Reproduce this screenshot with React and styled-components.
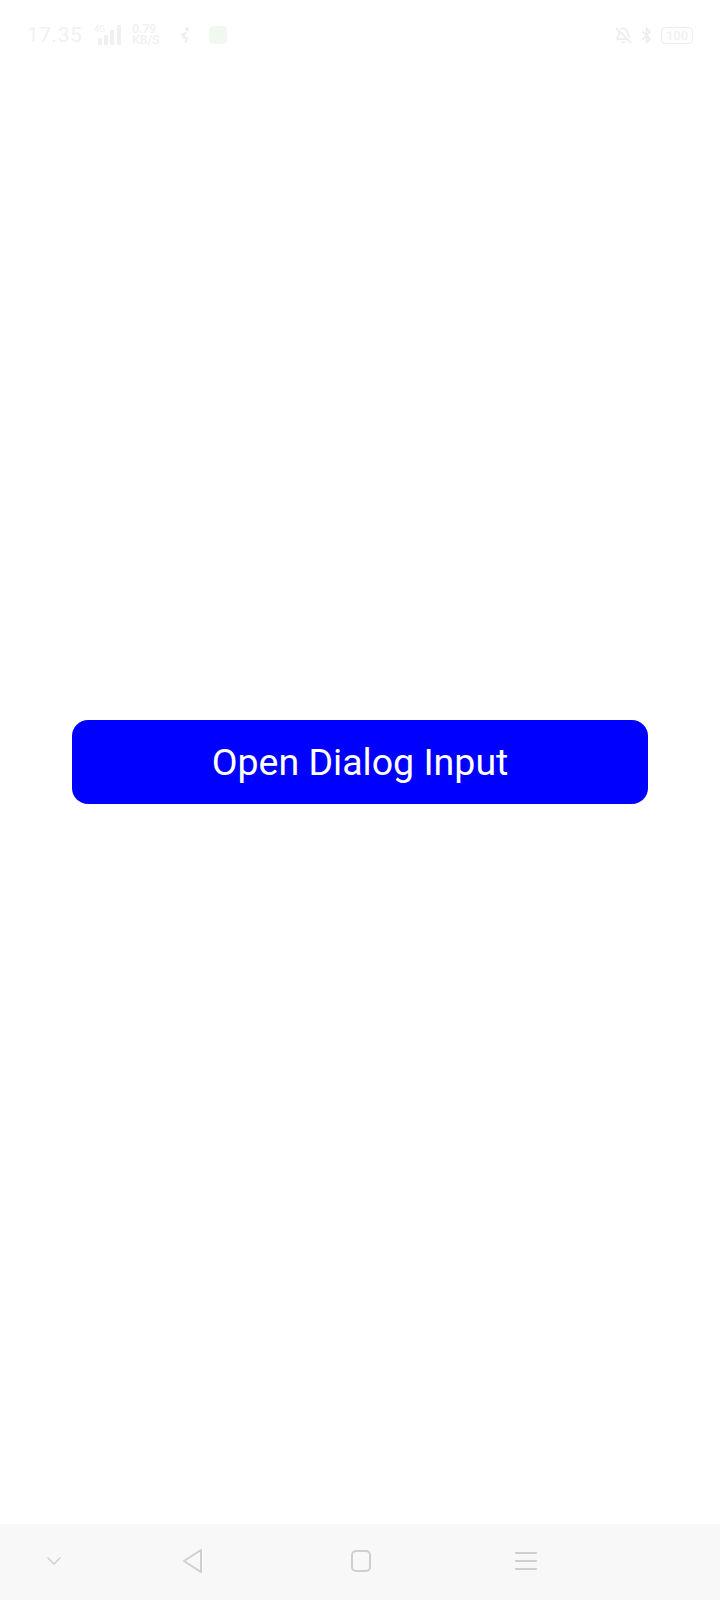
import React from "react";
import styled, { createGlobalStyle } from "styled-components";
import { BellOff, Bluetooth } from "lucide-react";

const GlobalStyle = createGlobalStyle`
  html, body {
    margin: 0;
    padding: 0;
    background: #ffffff;
    font-family: Roboto, "Noto Sans", sans-serif;
  }
`;

const Screen = styled.div`
  width: 720px;
  height: 1600px;
  display: flex;
  flex-direction: column;
  background: #ffffff;
`;

const StatusBar = styled.div`
  height: 70px;
  display: flex;
  align-items: center;
  justify-content: space-between;
  padding: 0 27px 0 27px;
  box-sizing: border-box;
  color: #f1f1f1;
`;

const StatusGroup = styled.div`
  display: flex;
  align-items: center;
  gap: ${(p) => p.gap || 8}px;
`;

const Clock = styled.span`
  font-size: 21px;
  letter-spacing: 0.5px;
`;

const Speed = styled.span`
  display: flex;
  flex-direction: column;
  font-size: 12px;
  line-height: 11px;
  font-weight: 500;
`;

const AppBadge = styled.span`
  width: 18px;
  height: 18px;
  border-radius: 4px;
  background: #f0f8f0;
`;

const Battery = styled.span`
  width: 30px;
  height: 15px;
  border: 1.5px solid #ededed;
  border-radius: 4px;
  font-size: 13px;
  font-weight: 500;
  display: flex;
  align-items: center;
  justify-content: center;
`;

const Main = styled.main`
  flex: 1;
  display: flex;
  justify-content: center;
  padding-top: 650px;
`;

const DialogButton = styled.button`
  width: 576px;
  height: 84px;
  border: none;
  border-radius: 16px;
  background: #0000ff;
  color: #ffffff;
  font-family: Roboto, "Noto Sans", sans-serif;
  font-size: 37.5px;
  cursor: pointer;
`;

const NavBar = styled.nav`
  height: 76px;
  background: #f8f8f8;
  display: grid;
  grid-template-columns: 108px 170px 166px 164px 1fr;
  align-items: center;
  padding-bottom: 2px;
  box-sizing: border-box;
`;

const NavSlot = styled.div`
  display: flex;
  justify-content: center;
  align-items: center;
`;

const Signal = () => (
  <svg width="34" height="22" viewBox="0 0 34 22">
    <text x="4" y="8" fontSize="9" fill="#efefef" fontFamily="Roboto">4G</text>
    <rect x="8" y="14" width="4" height="7" fill="#f0f0f0" />
    <rect x="14" y="11" width="4" height="10" fill="#f0f0f0" />
    <rect x="20" y="6" width="4" height="15" fill="#f0f0f0" />
    <rect x="27" y="1" width="4" height="20" fill="#f0f0f0" />
  </svg>
);

const Runner = () => (
  <svg width="12" height="18" viewBox="0 0 12 18">
    <circle cx="8" cy="3" r="2" fill="#ececec" />
    <path d="M7 6 L4 11 L8 12 L6 17 M5 8 L2 9" stroke="#ececec" strokeWidth="1.6" fill="none" />
  </svg>
);

const navStroke = { stroke: "#cfcfcf", strokeWidth: 2, fill: "none", strokeLinecap: "round", strokeLinejoin: "round" };

export default function App() {
  return (
    <>
      <GlobalStyle />
      <Screen>
        <StatusBar>
          <StatusGroup gap={8}>
            <Clock>17.35</Clock>
            <Signal />
            <Speed>
              <span>0.79</span>
              <span>KB/S</span>
            </Speed>
            <span style={{ width: 4 }} />
            <Runner />
            <span style={{ width: 2 }} />
            <AppBadge />
          </StatusGroup>
          <StatusGroup gap={6}>
            <BellOff size={17} color="#ededed" strokeWidth={2.5} />
            <Bluetooth size={17} color="#ededed" strokeWidth={2.5} />
            <Battery>100</Battery>
          </StatusGroup>
        </StatusBar>
        <Main>
          <DialogButton>Open Dialog Input</DialogButton>
        </Main>
        <NavBar>
          <NavSlot>
            <svg width="16" height="10" viewBox="0 0 16 10">
              <path d="M2 2 L8 8 L14 2" {...navStroke} strokeWidth="1.5" />
            </svg>
          </NavSlot>
          <NavSlot>
            <svg width="24" height="26" viewBox="0 0 24 26">
              <path d="M20 2 L20 24 L3 13 Z" {...navStroke} />
            </svg>
          </NavSlot>
          <NavSlot>
            <svg width="22" height="24" viewBox="0 0 22 24">
              <rect x="2" y="2" width="18" height="20" rx="4" {...navStroke} />
            </svg>
          </NavSlot>
          <NavSlot>
            <svg width="24" height="22" viewBox="0 0 24 22">
              <path d="M2 3 H22 M2 11 H22 M2 19 H22" {...navStroke} />
            </svg>
          </NavSlot>
          <NavSlot />
        </NavBar>
      </Screen>
    </>
  );
}
